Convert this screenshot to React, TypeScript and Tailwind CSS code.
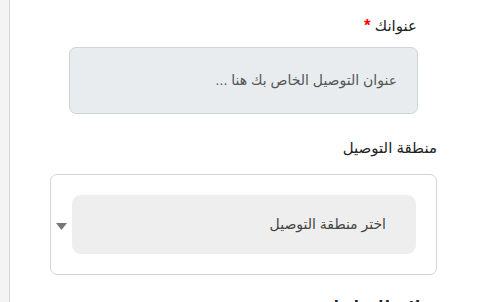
import React from 'react';

const App: React.FC = () => {
  return (
    <div
      className="flex h-[302px] w-full overflow-hidden bg-white"
      style={{ fontFamily: '"Liberation Sans", "DejaVu Sans", Arial, sans-serif' }}
    >
      {/* side strip */}
      <div className="w-[10px] shrink-0 bg-[#f4f4f4] border-r border-[#d4d4d4]" />

      <div dir="rtl" className="flex flex-1 flex-col">
        {/* Address */}
        <label className="mr-[65px] mt-[16px] h-[20px] shrink-0 text-[15px] leading-[20px] text-[#222]">
          عنوانك <span className="font-bold text-[17px] text-[#ff0000]">*</span>
        </label>
        <div className="mr-[64px] mt-[11px] flex h-[67px] w-[349px] shrink-0 items-center rounded-[7px] border border-[#ced4da] bg-[#e9ecef] pr-[20px] text-[14px] text-[#555]">
          عنوان التوصيل الخاص بك هنا ...
        </div>

        {/* Delivery zone */}
        <label className="mr-[45px] mt-[24px] h-[20px] shrink-0 text-[15px] leading-[20px] text-[#222]">
          منطقة التوصيل
        </label>
        <div className="mr-[45px] mt-[16px] flex h-[101px] w-[387px] shrink-0 items-center gap-[5px] rounded-[7px] border border-[#d4d4d8] bg-white pr-[20px] pl-[5px]">
          <div className="flex h-[59px] w-[345px] items-center rounded-[9px] bg-[#eeeeee] pr-[30px] text-[14px] text-[#444]">
            اختر منطقة التوصيل
          </div>
          <svg width="11" height="7" viewBox="0 0 11 7" className="mt-[4px] shrink-0">
            <path d="M0 0 L11 0 L5.5 7 Z" fill="#777" />
          </svg>
        </div>

        {/* Next field, cut off */}
        <label className="mr-[52px] mt-[21px] shrink-0 text-[15px] font-bold leading-[20px] text-[#222]">
          ملاحظات إضافية
        </label>
      </div>
    </div>
  );
};

export default App;
